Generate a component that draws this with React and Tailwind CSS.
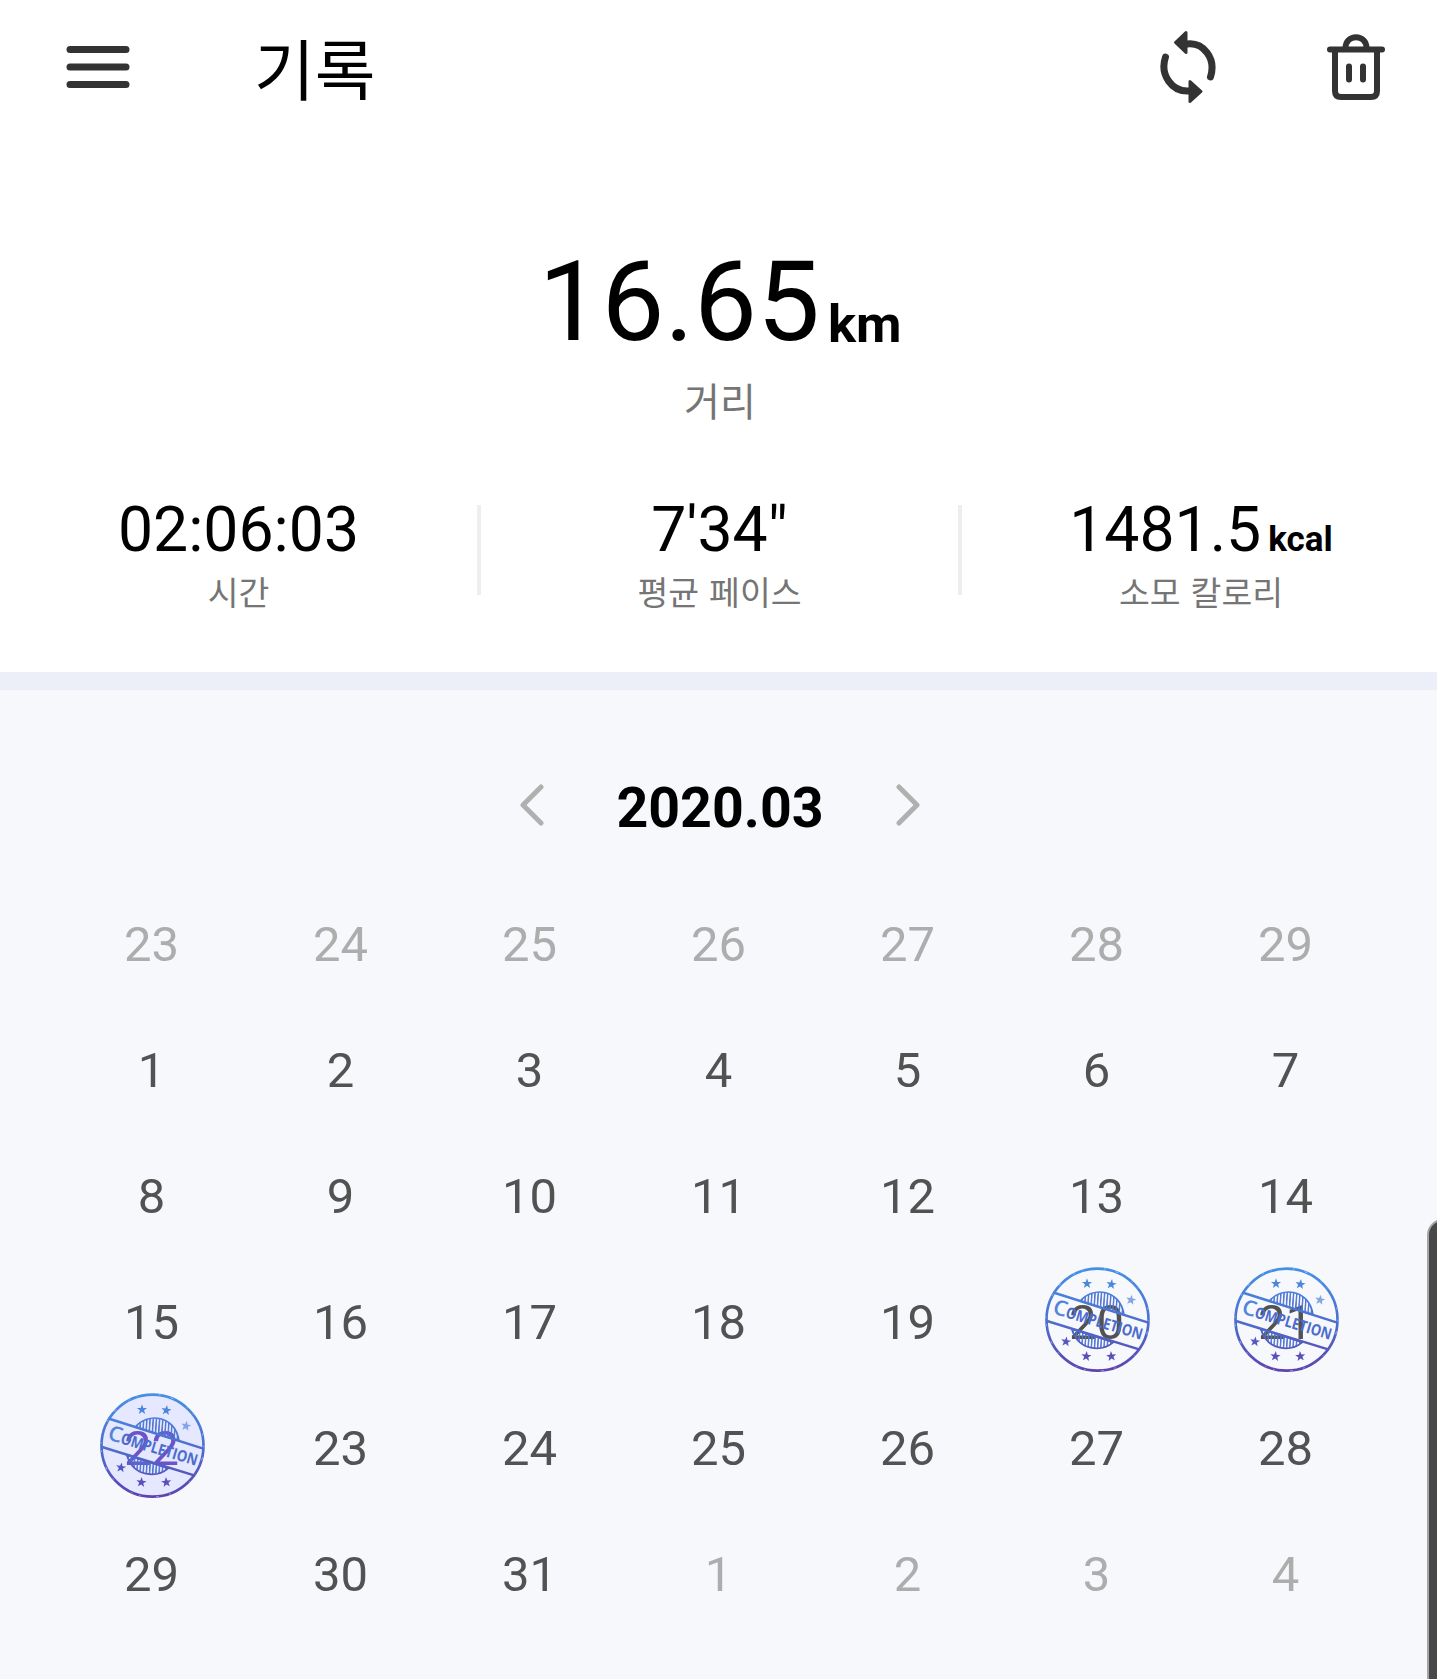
const STAR = "M0,-16 L3.8,-5.2 L15.2,-4.9 L6.2,2 L9.4,12.9 L0,6.5 L-9.4,12.9 L-6.2,2 L-15.2,-4.9 L-3.8,-5.2 Z";
const KR = "font-['Noto_Sans_CJK_KR',sans-serif]";

const stars = [
  { x: 170, y: 86, turn: 0, ink: "#4a86dc" },
  { x: 243, y: 88, turn: 8, ink: "#4a86dc" },
  { x: 302, y: 135, turn: 10, ink: "#84a6e4" },
  { x: 107, y: 260, turn: 8, ink: "#5458bf" },
  { x: 168, y: 304, turn: 5, ink: "#594fb9" },
  { x: 243, y: 304, turn: -5, ink: "#594fb9" },
];

function Stamp({ id }) {
  const paint = `url(#${id}-ink)`;
  return (
    <svg viewBox="44 36 315 315" className="absolute left-[42.5px] top-[8px] size-[105px] overflow-visible" aria-hidden="true">
      <defs>
        <linearGradient id={`${id}-ink`} gradientUnits="userSpaceOnUse" x1="0" y1="36" x2="0" y2="351">
          <stop offset="0" stopColor="#4490e6" />
          <stop offset="0.5" stopColor="#4c70d0" />
          <stop offset="1" stopColor="#5d42b0" />
        </linearGradient>
        <pattern id={`${id}-hatch`} width="9.500" height="20" patternUnits="userSpaceOnUse" patternTransform="rotate(4)">
          <rect width="4.500" height="20" fill="#4f74d2" />
        </pattern>
      </defs>
      <circle cx="201.500" cy="194" r="153" fill="none" stroke={paint} strokeWidth="8" />
      <circle cx="201.500" cy="194" r="154" fill="none" stroke="#f2f5fe" strokeWidth="2.500" strokeDasharray="5 31 9 47 4 22 3 65" opacity="0.6" />
      <g fill={`url(#${id}-hatch)`} stroke={paint} strokeWidth="5">
        <path d="M150 138C182 96 268 98 281 179Z" />
        <path d="M124 222C145 290 215 290 249 262Z" />
      </g>
      <path d="M74 114L354 203M50 198L329 284" stroke={paint} strokeWidth="7.500" fill="none" />
      {stars.map(({ x, y, turn, ink }) => (
        <path key={`${x}-${y}`} d={STAR} transform={`translate(${x} ${y}) rotate(${turn})`} fill={ink} />
      ))}
      <g transform="translate(64 175) rotate(16.500)" className="font-['Open_Sans',sans-serif]">
        <text x="0" y="0" fontSize="64" fontWeight="600" textLength="42" lengthAdjust="spacingAndGlyphs" fill="#5284d8">C</text>
        <text x="41" y="0" fontSize="47" fontWeight="700" textLength="238" lengthAdjust="spacingAndGlyphs" fill="#4c6ccd">OMPLETION</text>
      </g>
    </svg>
  );
}

function MenuIcon() {
  return (
    <svg width="64" height="44" viewBox="0 0 64 44" fill="none" stroke="#333" strokeWidth="7" strokeLinecap="round">
      <path d="M4 4.500H60M4 22H60M4 39.500H60" />
    </svg>
  );
}

function SyncIcon() {
  return (
    <svg width="58" height="74" viewBox="0 0 58 74" fill="none" stroke="#333" strokeWidth="7" strokeLinecap="round">
      <path d="M28 14C44 12 57.500 28 51.500 47" />
      <path d="M6.500 27C0.500 45 13 62 30 61" />
      <path d="M16.500 12.500L27 2.500V22.500Z M42 61.500L31 51.500V71.500Z" fill="#333" strokeWidth="3" strokeLinejoin="round" />
    </svg>
  );
}

function TrashIcon() {
  return (
    <svg width="60" height="68" viewBox="0 0 60 68" fill="none" stroke="#333" strokeWidth="6" strokeLinecap="round">
      <path d="M4 16.500H56" />
      <path d="M19.500 15C19.500 0.500 40.500 0.500 40.500 15" />
      <path d="M9 19V58Q9 64 15 64H45Q51 64 51 58V19" />
      <path d="M23 33.500V46.500M37 33.500V46.500" />
    </svg>
  );
}

function Chevron({ d }) {
  return (
    <svg width="24" height="42" viewBox="0 0 24 42" className="mb-[4px]" fill="none" stroke="#b0b0b0" strokeWidth="5" strokeLinecap="round" strokeLinejoin="round">
      <path d={d} />
    </svg>
  );
}

function Stat({ value, unit, label }) {
  return (
    <div className="flex flex-col items-center">
      <div className="flex items-baseline text-[62.500px] leading-[63px]">
        {value}
        {unit && <span className="ml-[7px] text-[35px] font-bold leading-[35px]">{unit}</span>}
      </div>
      <div className={`${KR} mt-[10px] text-[33.500px] leading-[40px] text-[#757575] [word-spacing:2.500px]`}>{label}</div>
    </div>
  );
}

const days = [
  ...[23, 24, 25, 26, 27, 28, 29].map((n) => ({ n, out: true })),
  ...Array.from({ length: 31 }, (_, i) => ({ n: i + 1 })),
  ...[1, 2, 3, 4].map((n) => ({ n, out: true })),
];
const stamped = [20, 21, 22];

function Day({ day, index }) {
  const done = index > 20 && index < 29 && stamped.includes(day.n);
  const selected = done && day.n === 22;
  const tone = selected ? "text-[#6c54c8]" : day.out ? "text-[#adadad]" : "text-[#525252]";
  return (
    <div className={`relative flex h-[126px] items-center justify-center text-[49px] leading-none ${tone}`}>
      {selected && <div className="absolute left-[43px] top-[9px] size-[103px] rounded-full bg-[#e5e8ff]" />}
      <span className="relative">{day.n}</span>
      {done && <Stamp id={`stamp-${day.n}`} />}
    </div>
  );
}

export default function App() {
  return (
    <div className="relative h-[1679px] w-full overflow-hidden bg-[#f7f8fc] font-['Roboto',sans-serif] text-black">
      <div className="h-[672px] bg-white">
        <header className="flex h-[134px] items-center pl-[66px] pr-[51px]">
          <MenuIcon />
          <h1 className={`${KR} mb-[2px] ml-[124px] text-[66px] leading-[80px]`}>기록</h1>
          <div className="ml-auto flex items-center gap-[109px]">
            <SyncIcon />
            <TrashIcon />
          </div>
        </header>
        <section className="flex flex-col items-center pl-[3px] pt-[112px]">
          <div className="flex items-baseline text-[112px] leading-[112px]">
            16.65
            <span className="relative top-[2px] ml-[8px] text-[52.500px] font-bold leading-[53px]">km</span>
          </div>
          <div className={`${KR} mt-[17px] text-[39px] leading-[48px] text-[#757575]`}>거리</div>
        </section>
        <section className="mt-[75px] grid grid-cols-[477px_4px_477px_4px_1fr]">
          <Stat value="02:06:03" label="시간" />
          <div className="mt-[7px] h-[90px] bg-[#eee]" />
          <Stat value={`7'34"`} label="평균 페이스" />
          <div className="mt-[7px] h-[90px] bg-[#eee]" />
          <div className="pl-[3px]">
            <Stat value="1481.5" unit="kcal" label="소모 칼로리" />
          </div>
        </section>
      </div>
      <div className="h-[18px] bg-[#eceff7]" />
      <div className="flex items-center justify-center pl-[3px] pt-[87px]">
        <Chevron d="M21 3L3 21L21 39" />
        <div className="relative top-[2px] w-[352px] text-center text-[55.500px] font-bold leading-[60px]">2020.03</div>
        <Chevron d="M3 3L21 21L3 39" />
      </div>
      <div className="mx-[57px] mt-[44px] grid grid-cols-7">
        {days.map((day, i) => (
          <Day key={i} day={day} index={i} />
        ))}
      </div>
      <div className="absolute left-[1427px] top-[1219px] h-[480px] w-[40px] rounded-tl-[16px] border-2 border-[#a5a5a5] bg-[#484848]" />
    </div>
  );
}
